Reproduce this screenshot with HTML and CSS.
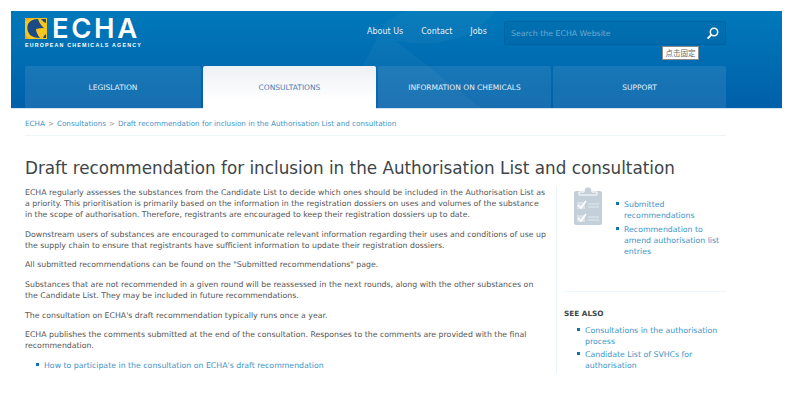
FILE: index.html
```html
<!DOCTYPE html>
<html lang="en">
<head>
<meta charset="utf-8">
<title>Draft recommendation for inclusion in the Authorisation List and consultation</title>
<link rel="stylesheet" href="styles.css">
</head>
<body>
<header class="site-header">
  <svg class="header-art" viewBox="0 0 771 97" preserveAspectRatio="none" aria-hidden="true">
    <path d="M330 97 L375 10 L395 0 L485 0 L465 20 Q430 38 385 30 L470 97 Z" fill="#ffffff" fill-opacity="0.035"/>
  </svg>
  <div class="top-row">
    <a class="logo" href="#">
      <span class="logo-main">
        <svg class="logo-mark" viewBox="0 0 22 21" aria-hidden="true">
          <rect width="22" height="21" fill="#f0a81e"/>
          <path d="M8 0 H22 V21 H4 Q1 18 0 14 V4 Q3 1 8 0 Z" fill="#f7c51f"/>
          <path d="M13 1 Q6 1 3 6 Q1 12 5 17 Q9 20 15 20 Q11 15 11 11 Q15 10 19 10 Q15 7 13 1 Z" fill="#1b4a84"/>
          <path d="M16 1 Q18 4 21 5 V1 Z" fill="#1b4a84"/>
          <path d="M18 20 Q19 17 21 16 V20 Z" fill="#1b4a84"/>
        </svg>
        <span class="logo-word">ECHA</span>
      </span>
      <span class="logo-sub">EUROPEAN CHEMICALS AGENCY</span>
    </a>
    <nav class="top-links">
      <a href="#">About Us</a>
      <a href="#">Contact</a>
      <a href="#">Jobs</a>
    </nav>
    <form class="search">
      <span class="search-text">Search the ECHA Website</span>
      <svg class="search-icon" viewBox="0 0 12 12" aria-hidden="true">
        <circle cx="7" cy="5" r="3.7" fill="none" stroke="#fff" stroke-width="1.5"/>
        <path d="M4.3 7.8 L1.2 11" stroke="#fff" stroke-width="1.8" stroke-linecap="round"/>
      </svg>
      <span class="tooltip">点击固定</span>
    </form>
  </div>
  <nav class="tabs">
    <a class="tab tab-first" href="#">LEGISLATION</a>
    <a class="tab tab-active" href="#">CONSULTATIONS</a>
    <a class="tab" href="#">INFORMATION ON CHEMICALS</a>
    <a class="tab" href="#">SUPPORT</a>
  </nav>
</header>
<div class="page">
  <div class="crumbs">
    <a href="#">ECHA</a><span class="sep">&gt;</span><a href="#">Consultations</a><span class="sep">&gt;</span><a href="#">Draft recommendation for inclusion in the Authorisation List and consultation</a>
  </div>
  <h1 class="title">Draft recommendation for inclusion in the Authorisation List and consultation</h1>
  <div class="columns">
    <main class="content">
      <p>ECHA regularly assesses the substances from the Candidate List to decide which ones should be included in the Authorisation List as a priority. This prioritisation is primarily based on the information in the registration dossiers on uses and volumes of the substance in the scope of authorisation. Therefore, registrants are encouraged to keep their registration dossiers up to date.</p>
      <p>Downstream users of substances are encouraged to communicate relevant information regarding their uses and conditions of use up the supply chain to ensure that registrants have sufficient information to update their registration dossiers.</p>
      <p>All submitted recommendations can be found on the "Submitted recommendations" page.</p>
      <p>Substances that are not recommended in a given round will be reassessed in the next rounds, along with the other substances on the Candidate List. They may be included in future recommendations.</p>
      <p>The consultation on ECHA's draft recommendation typically runs once a year.</p>
      <p>ECHA publishes the comments submitted at the end of the consultation. Responses to the comments are provided with the final recommendation.</p>
      <ul class="links main-links">
        <li><a href="#">How to participate in the consultation on ECHA's draft recommendation</a></li>
      </ul>
    </main>
    <aside class="side">
      <div class="side-top">
        <svg class="clip" viewBox="0 0 28 38" aria-hidden="true">
          <rect y="4" width="28" height="34" rx="2" fill="#c3d0da"/>
          <path d="M5 8 V5 H10 Q10 0 14 0 Q18 0 18 5 H23 V8 Z" fill="#c3d0da" stroke="#fff" stroke-width="1"/>
          <rect x="3" y="15" width="8" height="7" fill="#d8e1e8"/>
          <rect x="3" y="28" width="8" height="7" fill="#d8e1e8"/>
          <path d="M4 18 L7 21 L12 14 M4 31 L7 34 L12 27" fill="none" stroke="#fff" stroke-width="1.6"/>
          <path d="M14 17 H25 M14 20 H25 M14 30 H25 M14 33 H25" stroke="#e3e9ee" stroke-width="1.2"/>
        </svg>
        <ul class="links">
          <li><a href="#">Submitted recommendations</a></li>
          <li><a href="#">Recommendation to amend authorisation list entries</a></li>
        </ul>
      </div>
      <div class="see-also">
        <h2>SEE ALSO</h2>
        <ul class="links">
          <li><a href="#">Consultations in the authorisation process</a></li>
          <li><a href="#">Candidate List of SVHCs for authorisation</a></li>
        </ul>
      </div>
    </aside>
  </div>
</div>
</body>
</html>
```
FILE: styles.css
```css
* { box-sizing: border-box; }
html, body { margin: 0; padding: 0; }
body {
  width: 795px;
  padding: 11px 13px 0 11px;
  background: #fff;
  font-family: "DejaVu Sans", Verdana, sans-serif;
  font-size: 7.8px;
  line-height: 11px;
  color: #555;
}
a { color: inherit; text-decoration: none; }
ul { margin: 0; padding: 0; list-style: none; }

.site-header {
  position: relative;
  height: 98px;
  padding: 10px 56px 0 14px;
  background: linear-gradient(180deg, #0079ba 0%, #0060a9 100%);
  border-bottom: 1px solid #cfe3f1;
  display: flex;
  flex-direction: column;
}
.header-art { position: absolute; left: 0; top: 0; width: 100%; height: 97px; pointer-events: none; }
.top-row { position: relative; display: flex; align-items: flex-start; height: 45px; }
.logo { display: flex; flex-direction: column; width: 116px; margin-top: -3px; color: #fff; flex: none; }
.logo-main { display: flex; align-items: center; gap: 5px; height: 21px; }
.logo-mark { width: 22px; height: 21px; flex: none; }
.logo-word { font-family: "Inter", sans-serif; font-size: 27.5px; font-weight: 600; line-height: 21px; letter-spacing: 2.6px; white-space: nowrap; }
.logo-sub { font-family: "Liberation Sans", sans-serif; font-weight: 700; font-size: 5.3px; line-height: 6px; letter-spacing: 1.2px; margin-top: 3px; white-space: nowrap; }
.top-links { display: flex; gap: 18px; margin-left: 226px; margin-top: 5px; color: #e6f1f8; white-space: nowrap; font-size: 8px; flex: none; }
.search {
  position: relative;
  display: flex;
  align-items: center;
  justify-content: space-between;
  width: 222px;
  height: 24px;
  margin-left: auto;
  padding: 0 6px 0 6px;
  background: rgba(0, 60, 120, 0.1);
  border: 1px solid rgba(0, 70, 130, 0.25);
  border-radius: 2px;
  color: #6fa9d0;
  flex: none;
}
.search-icon { width: 12px; height: 12px; }
.tooltip {
  position: absolute;
  left: 157px;
  top: 24px;
  width: 37px;
  height: 14px;
  background: #fff;
  border: 1px solid #8a8a8a;
  font-family: "Noto Sans CJK SC", sans-serif;
  font-size: 7.5px;
  line-height: 12px;
  text-align: center;
  color: #666;
}
.tabs { position: relative; display: flex; gap: 2px; height: 42px; width: 701px; }
.tab {
  flex: 1;
  display: flex;
  align-items: center;
  justify-content: center;
  background: rgba(255, 255, 255, 0.09);
  border-radius: 2px 2px 0 0;
  color: #e3eff7;
  font-size: 7.5px;
  height: 43px;
}
.tab-first { flex: none; width: 176px; }
.tab-active { background: linear-gradient(180deg, #edf0f4 0%, #fff 80%); color: #4a7fb5; }

.page { padding: 0 56px 0 14px; }
.crumbs { height: 27px; padding-top: 9px; border-bottom: 1px solid #eef5f9; color: #3f94c8; white-space: nowrap; font-size: 7.2px; }
.sep { margin: 0 3px; color: #999; }
.title { margin: 22px 0 0; font-size: 16.8px; line-height: 20px; font-weight: 400; color: #3d4548; white-space: nowrap; }
.columns { display: flex; margin-top: 9px; align-items: flex-start; }
.content { width: 522px; flex: none; }
.content p { margin: 0 0 8.7px; }
.links { color: #3f94c8; }
.links li { position: relative; padding-left: 8px; margin-bottom: 3px; }
.links li::before { content: ""; position: absolute; left: 0; top: 3px; width: 3px; height: 3px; background: #1173b5; }
.main-links { margin: 0 0 0 11px; }
.side { width: 170px; flex: none; margin-left: 9px; border-left: 1px solid #e8f3fa; padding-left: 7px; height: 186px; }
.side-top { display: flex; padding: 0 0 0 10px; height: 105px; border-bottom: 1px solid #eef7fc; }
.clip { width: 28px; height: 38px; flex: none; }
.side-top .links { margin: 12px 0 0 14px; width: 110px; }
.see-also h2 { margin: 16px 0 5.5px; font-size: 7.3px; line-height: 11px; font-weight: 700; color: #3d4548; }
.see-also .links { margin-left: 13px; width: 146px; }
.see-also .links li { margin-bottom: 2.5px; }
```
